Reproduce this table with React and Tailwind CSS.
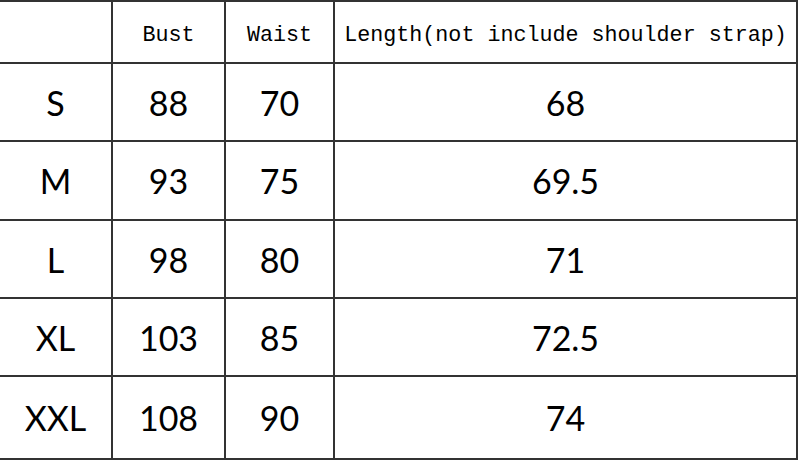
const headers = ['', 'Bust', 'Waist', 'Length(not include shoulder strap)'];

const rows = [
  ['S', '88', '70', '68'],
  ['M', '93', '75', '69.5'],
  ['L', '98', '80', '71'],
  ['XL', '103', '85', '72.5'],
  ['XXL', '108', '90', '74'],
];

const rowHeights = ['h-[78px]', 'h-[79px]', 'h-[78px]', 'h-[78px]', 'h-[83px]'];

export default function App() {
  return (
    <div className="w-[800px] h-[463px] bg-white overflow-hidden">
      <div className="w-[798px] border-t-2 border-[#333] grid grid-cols-[113px_113px_109px_463px]">
        {headers.map((h, i) => (
          <div
            key={i}
            className="h-[62px] border-r-2 border-b-2 border-[#333] flex items-center justify-center pt-[9px] text-[21.7px] text-black font-['Liberation_Mono',monospace]"
          >
            {h}
          </div>
        ))}
        {rows.map((r, ri) =>
          r.map((c, ci) => (
            <div
              key={ri + '-' + ci}
              className={`${rowHeights[ri]} border-r-2 border-b-2 border-[#333] flex items-center justify-center text-[34px] text-black font-['Lato',sans-serif]`}
            >
              {c}
            </div>
          ))
        )}
      </div>
    </div>
  );
}
